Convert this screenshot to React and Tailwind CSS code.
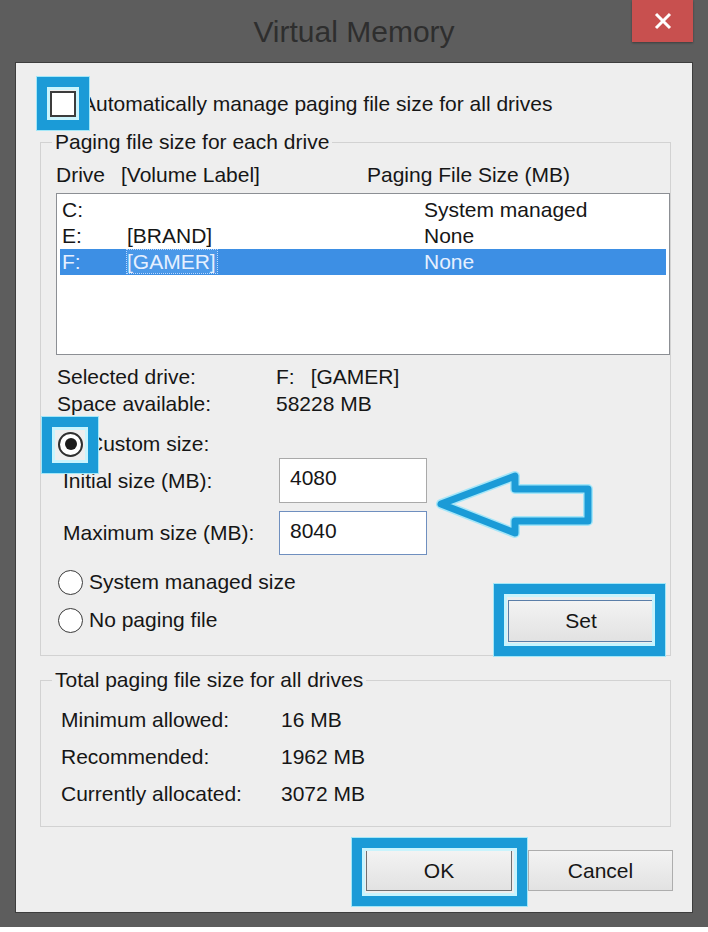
import React from 'react';

// blue call-out frame drawn over a control
function Callout({ className }) {
  return (
    <div
      className={`pointer-events-none absolute border-[10px] border-[#1b9bd7] shadow-[0_0_0_1px_#a3e7f8,inset_0_0_0_3px_#c9f4fd] ${className}`}
    />
  );
}

function Radio({ checked, children }) {
  return (
    <span
      className={`relative w-[25px] h-[25px] rounded-full bg-white flex items-center justify-center ${
        checked ? 'border-2 border-[#2f2f2f]' : 'border-[1.5px] border-[#3a3a3a]'
      }`}
    >
      {checked && <span className="w-[12px] h-[12px] rounded-full bg-[#1c1c1c]" />}
      {children}
    </span>
  );
}

const drives = [
  { drive: 'C:', label: '', size: 'System managed' },
  { drive: 'E:', label: '[BRAND]', size: 'None' },
  { drive: 'F:', label: '[GAMER]', size: 'None', selected: true },
];

const totals = [
  ['Minimum allowed:', '16 MB'],
  ['Recommended:', '1962 MB'],
  ['Currently allocated:', '3072 MB'],
];

export default function App() {
  return (
    <div className="w-[708px] h-[932px] bg-white overflow-hidden font-['Liberation_Sans',Arial,sans-serif] text-[21px] leading-[24px] text-[#161616]">
      <div className="h-[927px] bg-[#5d5d5d] flex flex-col">
        {/* Title bar */}
        <div className="h-[62px] grid grid-cols-[1fr_auto_1fr]">
          <div />
          <div className="self-center text-[30px] leading-[34px] text-[#2e2e2e] pt-[1px]">Virtual Memory</div>
          <div className="flex justify-end pr-[15px]">
            <button className="w-[61px] h-[42px] bg-[#c8504f] flex items-center justify-center shadow-[0_1px_2px_rgba(0,0,0,0.35)]">
              <svg width="18" height="18" viewBox="0 0 18 18">
                <path d="M2 2L16 16M16 2L2 16" stroke="white" strokeWidth="3" />
              </svg>
            </button>
          </div>
        </div>

        {/* Client area */}
        <div className="relative mx-[15px] h-[851px] bg-[#eeeeee] border border-[#3d3d3d]">
          <div className="mt-[26px] h-[30px] flex items-center pl-[34px]">
            <span className="relative w-[26px] h-[26px] border-2 border-[#3c3c3c] bg-white">
              <Callout className="-left-[15px] -right-[15px] -top-[16px] -bottom-[15px]" />
            </span>
            <span className="ml-[6px]">Automatically manage paging file size for all drives</span>
          </div>

          {/* Paging file size for each drive */}
          <fieldset className="mt-[11px] ml-[24px] w-[631px] border border-[#d2d2d2] pb-[13px]">
            <legend className="ml-[11px] px-[3px]">Paging file size for each drive</legend>

            <div className="mt-[9px] flex pl-[15px]">
              <span className="w-[65px]">Drive</span>
              <span className="w-[246px]">[Volume Label]</span>
              <span>Paging File Size (MB)</span>
            </div>

            <div className="mt-[6px] ml-[15px] h-[162px] bg-white border border-[#8c8f94] pt-[3px] px-[3px]">
              {drives.map((d) => (
                <div
                  key={d.drive}
                  className={`h-[26px] flex items-center pl-[2px] ${d.selected ? 'bg-[#3d8fe4] text-[#e6f0ff]' : ''}`}
                >
                  <span className="w-[65px]">{d.drive}</span>
                  <span className="w-[297px]">
                    <span className={d.selected ? 'outline-1 outline-dotted outline-[#bcd9ff] bg-[#4a98e8] pr-[1px]' : ''}>
                      {d.label}
                    </span>
                  </span>
                  <span>{d.size}</span>
                </div>
              ))}
            </div>

            <div className="mt-[8px] pl-[16px]">
              <div className="h-[27px] flex items-center">
                <span className="w-[219px]">Selected drive:</span>
                <span>F:</span>
                <span className="ml-[16px]">[GAMER]</span>
              </div>
              <div className="h-[27px] flex items-center">
                <span className="w-[219px]">Space available:</span>
                <span>58228 MB</span>
              </div>
            </div>

            <div className="mt-[13px] h-[28px] flex items-center pl-[17px]">
              <Radio checked>
                <Callout className="-left-[18px] -right-[17px] -top-[17px] -bottom-[18px]" />
              </Radio>
              <span className="ml-[5px]">Custom size:</span>
            </div>

            <div className="h-[45px] flex items-center pl-[22px]">
              <span className="w-[216px]">Initial size (MB):</span>
              <div className="w-[148px] h-[45px] bg-white border border-[#a9a9a9] pl-[10px] pb-[5px] flex items-center">
                4080
              </div>
            </div>
            <div className="mt-[8px] h-[44px] flex items-center pl-[22px]">
              <span className="w-[216px]">Maximum size (MB):</span>
              <div className="w-[148px] h-[44px] bg-white border border-[#6f8fbf] pl-[10px] pb-[5px] flex items-center">
                8040
              </div>
            </div>

            <div className="mt-[12px] flex justify-between">
              <div className="pl-[17px] flex flex-col gap-[8px]">
                <div className="h-[30px] flex items-center">
                  <Radio />
                  <span className="ml-[6px]">System managed size</span>
                </div>
                <div className="h-[30px] flex items-center">
                  <Radio />
                  <span className="ml-[6px]">No paging file</span>
                </div>
              </div>
              <div className="relative mt-[33px] mr-[16px] h-[42px]">
                <button className="w-[146px] h-[42px] border border-[#5a7ea8] bg-linear-to-b from-[#f3f3f3] to-[#e2e2e2]">
                  Set
                </button>
                <Callout className="-left-[14px] -right-[11px] -top-[16px] -bottom-[14px]" />
              </div>
            </div>
          </fieldset>

          {/* Totals */}
          <fieldset className="mt-[12px] ml-[24px] w-[631px] border border-[#d2d2d2] pb-[14px]">
            <legend className="ml-[11px] px-[3px]">Total paging file size for all drives</legend>
            <div className="mt-[9px] pl-[20px]">
              {totals.map(([k, v]) => (
                <div key={k} className="h-[37px] flex items-center">
                  <span className="w-[220px]">{k}</span>
                  <span>{v}</span>
                </div>
              ))}
            </div>
          </fieldset>

          <div className="mt-[23px] flex justify-end gap-[16px] pr-[19px]">
            <div className="relative h-[41px]">
              <button className="w-[146px] h-[41px] border border-[#707070] bg-linear-to-b from-[#f3f3f3] to-[#e2e2e2]">
                OK
              </button>
              <Callout className="-left-[14px] -right-[15px] -top-[12px] -bottom-[15px]" />
            </div>
            <button className="w-[145px] h-[41px] border border-[#adadad] bg-linear-to-b from-[#f3f3f3] to-[#e2e2e2]">
              Cancel
            </button>
          </div>

          {/* arrow call-out */}
          <svg
            className="pointer-events-none absolute left-[420px] top-[407px]"
            width="158"
            height="70"
            viewBox="436 470 158 70"
          >
            <path
              d="M441 504 L515 476 L515 489 L588 489 L588 521 L515 521 L515 533 Z"
              fill="none"
              stroke="#a6e6f8"
              strokeWidth="10"
              strokeLinejoin="round"
            />
            <path
              d="M441 504 L515 476 L515 489 L588 489 L588 521 L515 521 L515 533 Z"
              fill="none"
              stroke="#1b9bd7"
              strokeWidth="7"
              strokeLinejoin="round"
            />
          </svg>
        </div>
      </div>
    </div>
  );
}
